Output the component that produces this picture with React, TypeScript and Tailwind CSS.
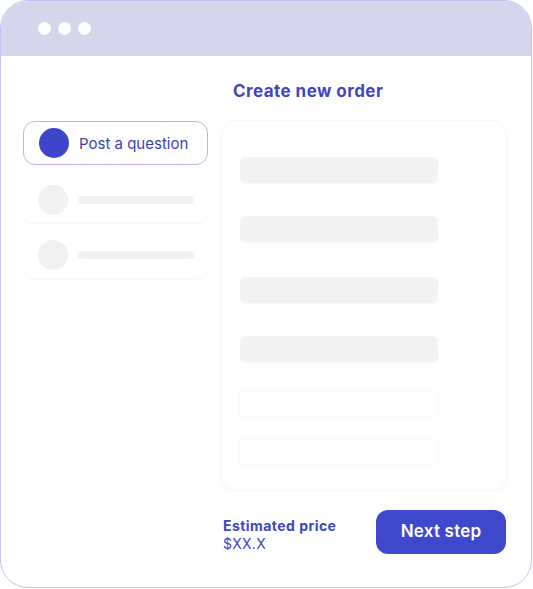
const skeletonBars = ["gray", "gray", "gray", "gray", "white", "white"] as const;
const barTops = ["mt-[36px]", "mt-[33px]", "mt-[35px]", "mt-[33px]", "mt-[29px]", "mt-[22px]"];

function SkeletonItem({ className }: { className?: string }) {
  return (
    <div
      className={`flex h-[43px] items-center gap-[10px] rounded-[10px] bg-white pb-[4px] pl-[15px] pr-[14px] shadow-[0_1px_3px_rgba(0,0,0,0.035)] ${className ?? ""}`}
    >
      <div className="h-[30px] w-[30px] shrink-0 rounded-full bg-[#f1f1f1]" />
      <div className="h-[8px] flex-1 rounded-full bg-[#f1f1f1]" />
    </div>
  );
}

export default function App() {
  return (
    <div className="h-[589px] w-[533px] bg-white font-['Inter',sans-serif]">
      <div className="flex h-[588px] w-[532px] flex-col overflow-hidden rounded-[28px] border border-[#bfc2f0] bg-white">
        <header className="flex h-[55px] shrink-0 items-center gap-[7px] bg-[#d4d6ec] pl-[37px] pb-[1px]">
          <span className="h-[13px] w-[13px] rounded-full bg-white" />
          <span className="h-[13px] w-[13px] rounded-full bg-white" />
          <span className="h-[13px] w-[13px] rounded-full bg-white" />
        </header>

        <div className="flex flex-1 flex-col pl-[22px] pr-[25px]">
          <h1 className="ml-[210px] mt-[24px] h-[22px] text-[17px] leading-[22px] font-bold tracking-[0.45px] text-[#3f46c2]">
            Create new order
          </h1>

          <div className="mt-[19px] flex gap-[14px]">
            <aside className="flex w-[185px] flex-col">
              <div className="flex h-[44px] items-center gap-[10px] rounded-[12px] border border-[#b5b8ec] bg-white pl-[15px]">
                <div className="h-[30px] w-[30px] rounded-full bg-[#3d45cb]" />
                <span className="text-[15px] leading-none text-[#3c43ae]">Post a question</span>
              </div>
              <SkeletonItem className="mt-[15px]" />
              <SkeletonItem className="mt-[12px]" />
            </aside>

            <section className="flex h-[369px] w-[284px] flex-col rounded-[14px] bg-white px-[18px] shadow-[0_0_3px_rgba(0,0,0,0.08)]">
              {skeletonBars.map((kind, i) => (
                <div
                  key={i}
                  className={`h-[26px] w-[198px] shrink-0 rounded-[6px] ${barTops[i]} ${
                    kind === "gray"
                      ? "bg-[#f2f2f2] shadow-[0_1px_2px_rgba(0,0,0,0.04)]"
                      : "bg-white shadow-[0_0_2px_rgba(0,0,0,0.1)]"
                  }`}
                />
              ))}
            </section>
          </div>

          <div className="ml-[200px] mt-[20px] flex items-center justify-between">
            <div className="mt-[5px] flex flex-col text-[#3f46c2]">
              <span className="text-[14px] leading-[18px] font-bold tracking-[0.45px]">Estimated price</span>
              <span className="text-[14px] leading-[18px] tracking-[0.3px]">$XX.X</span>
            </div>
            <button className="flex h-[44px] w-[130px] items-center justify-center rounded-[12px] bg-[#3f48cc] text-[17px] font-semibold tracking-[0.2px] text-white">
              Next step
            </button>
          </div>
        </div>
      </div>
    </div>
  );
}
